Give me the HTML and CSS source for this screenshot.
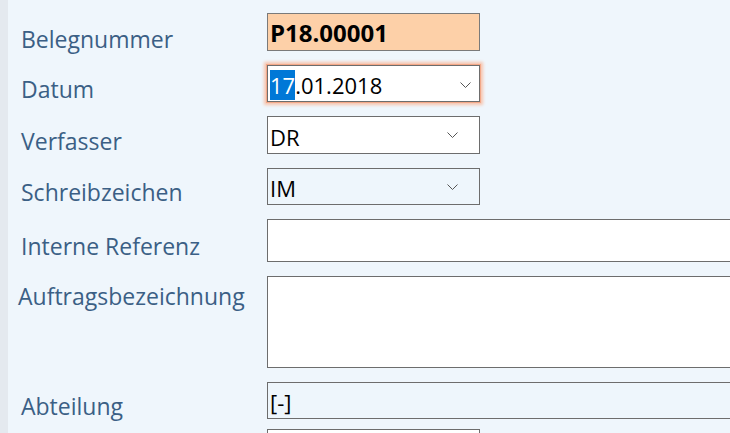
FILE: index.html
```html
<!DOCTYPE html>
<html lang="de">
<head>
<meta charset="UTF-8" />
<title>Beleg</title>
<link rel="stylesheet" href="styles.css">
</head>
<body>
  <form class="beleg-form">
    <label class="feld-label label-erste">Belegnummer</label>
    <div class="feld feld-kurz feld-nummer">P18.00001</div>

    <label class="feld-label">Datum</label>
    <div class="feld feld-kurz feld-fokus">
      <span class="wert"><span class="markiert">17</span>.01.2018</span>
      <svg class="pfeil pfeil-datum" width="11" height="6" viewBox="0 0 11 6"><path d="M0.5 0.5 L5.5 5.5 L10.5 0.5" fill="none" stroke="#555" stroke-width="1"/></svg>
    </div>

    <label class="feld-label">Verfasser</label>
    <div class="feld feld-kurz">
      <span class="wert">DR</span>
      <svg class="pfeil" width="11" height="6" viewBox="0 0 11 6"><path d="M0.5 0.5 L5.5 5.5 L10.5 0.5" fill="none" stroke="#555" stroke-width="1"/></svg>
    </div>

    <label class="feld-label">Schreibzeichen</label>
    <div class="feld feld-kurz feld-gesperrt">
      <span class="wert">IM</span>
      <svg class="pfeil" width="11" height="6" viewBox="0 0 11 6"><path d="M0.5 0.5 L5.5 5.5 L10.5 0.5" fill="none" stroke="#555" stroke-width="1"/></svg>
    </div>

    <label class="feld-label">Interne Referenz</label>
    <div class="feld feld-lang feld-ref"></div>

    <label class="feld-label label-oben">Auftragsbezeichnung</label>
    <div class="feld feld-lang feld-text"></div>

    <label class="feld-label">Abteilung</label>
    <div class="feld feld-lang feld-gesperrt"><span class="wert">[-]</span></div>

    <label class="feld-label"></label>
    <div class="feld feld-kurz feld-letztes"></div>
  </form>
</body>
</html>
```

FILE: styles.css
```css
html {
  overflow: hidden;
}
body {
  margin: 0;
  background: #eff6fc;
  border-left: 8px solid #e4e9ef;
  height: 433px;
  overflow: hidden;
  font-family: "Open Sans", "Noto Sans", sans-serif;
  font-size: 22px;
}

.beleg-form {
  display: grid;
  grid-template-columns: 259px 480px;
  row-gap: 14px;
  padding-top: 13px;
}

/* Beschriftungen links */
.feld-label {
  color: #3b5f85;
  font-size: 23px;
  padding-left: 13px;
  align-self: center;
  margin-top: 12px;
  line-height: 1;
}
.label-erste {
  margin-top: 14px;
}
.label-oben {
  align-self: start;
  margin-top: 9px;
  padding-left: 10px;
}

/* Eingabefelder */
.feld {
  box-sizing: border-box;
  border: 1px solid #6d6d6d;
  background: #fff;
  color: #000;
  height: 38px;
  display: flex;
  align-items: center;
  padding-left: 2px;
  position: relative;
}
.feld-kurz {
  width: 213px;
}
.feld-lang {
  width: 480px;
}
.feld-nummer {
  background: #fdd0a8;
  font-weight: bold;
  font-size: 24px;
  border-color: #7a7a7a;
  padding-top: 1px;
}
.feld-fokus {
  height: 37px;
  box-shadow: 0 0 0 1px #f3a888, 0 0 3px 3px #f7c4ad;
}
.feld-gesperrt {
  background: #eef6fc;
  height: 37px;
}
.feld-ref {
  height: 43px;
}
.feld-text {
  height: 92px;
}
.feld-letztes {
  margin-top: -4px;
}

.wert {
  line-height: 1;
  padding-top: 3px;
}
.markiert {
  background: #0078d7;
  color: #fff;
}

.pfeil {
  position: absolute;
  right: 21px;
  top: 15px;
}
.pfeil-datum {
  right: 8px;
  top: 16px;
}
```
